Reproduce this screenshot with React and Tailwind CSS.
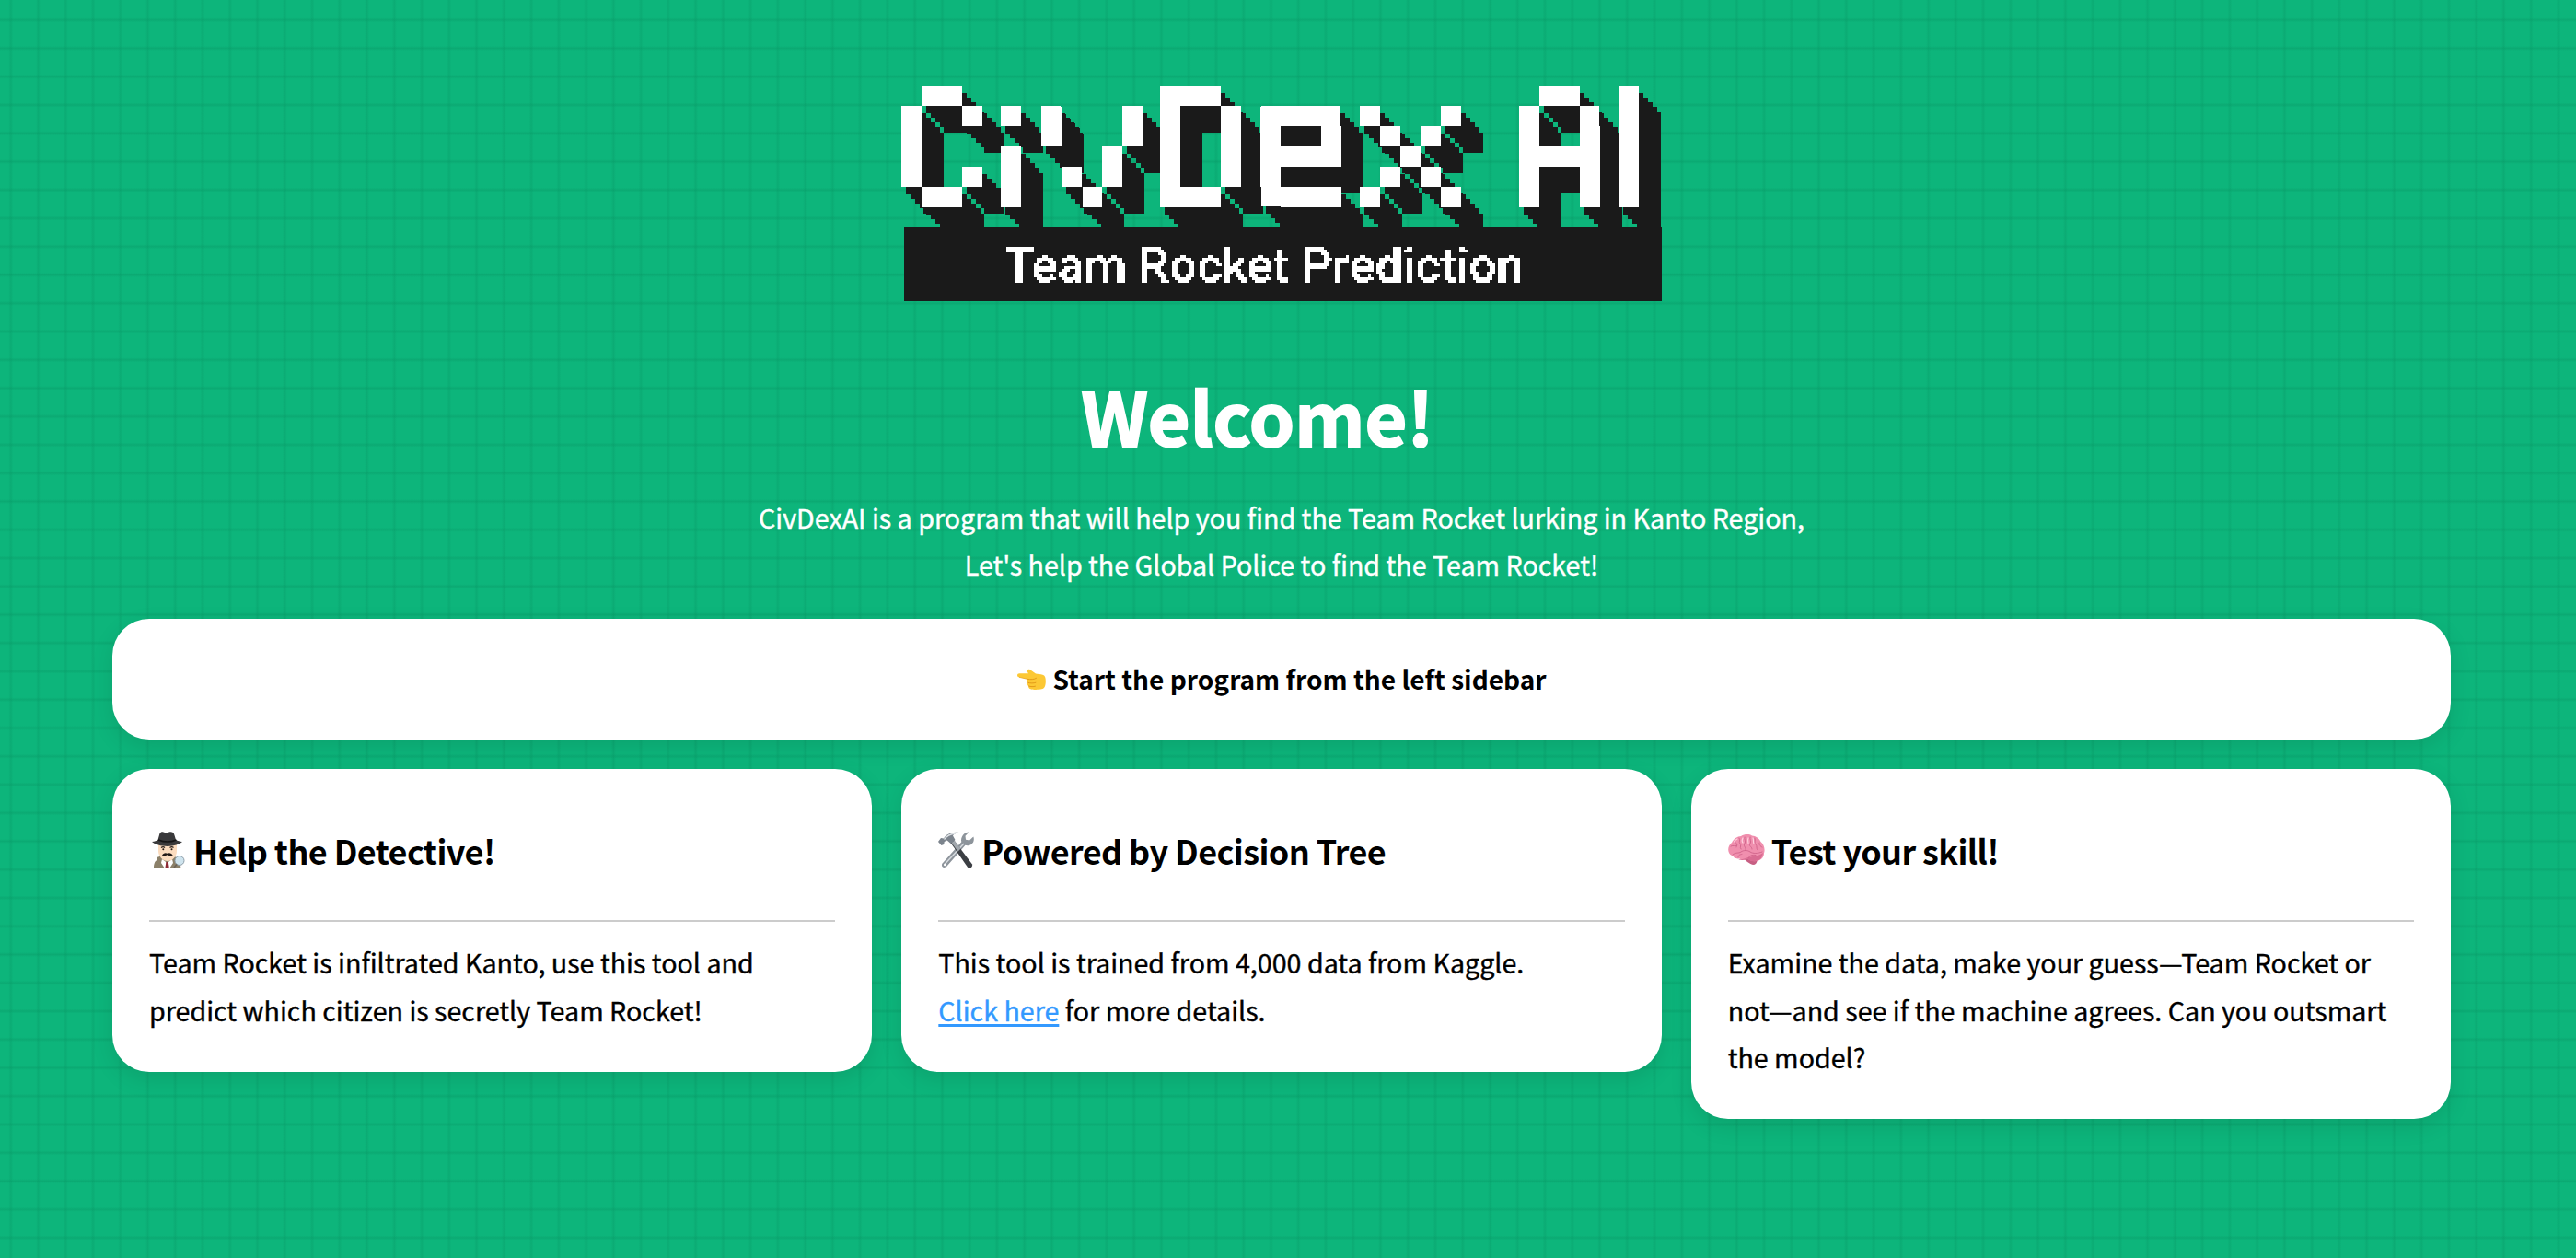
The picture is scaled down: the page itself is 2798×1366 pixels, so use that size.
import React from "react";

const SHADOW = "#1a1a1a";

function PixelFilters() {
  return (
    <svg width="0" height="0" className="absolute">
      <defs>
        <filter id="blocks" filterUnits="userSpaceOnUse" primitiveUnits="userSpaceOnUse" x="0" y="0" width="176" height="176" colorInterpolationFilters="sRGB">
          <feFlood x="10" y="10" width="2" height="2" floodColor="#fff" result="dot" />
          <feComposite in="dot" in2="dot" operator="over" x="0" y="0" width="22" height="22" result="cell" />
          <feTile in="cell" x="0" y="0" width="176" height="132" result="dots" />
          <feComposite in="SourceGraphic" in2="dots" operator="in" result="hits" />
          <feMorphology in="hits" operator="dilate" radius="10" result="fat" />
          <feComponentTransfer in="fat" result="face">
            <feFuncA type="discrete" tableValues="0 1" />
          </feComponentTransfer>
          <feFlood floodColor={SHADOW} result="ink" />
          <feComposite in="ink" in2="face" operator="in" result="dark" />
          <feOffset in="dark" dx="5" dy="8" result="s1" />
          <feOffset in="dark" dx="10" dy="13" result="s2" />
          <feOffset in="dark" dx="15" dy="18" result="s3" />
          <feOffset in="dark" dx="20" dy="23" result="s4" />
          <feOffset in="dark" dx="24" dy="29" result="s5" />
          <feMerge>
            <feMergeNode in="s5" />
            <feMergeNode in="s4" />
            <feMergeNode in="s3" />
            <feMergeNode in="s2" />
            <feMergeNode in="s1" />
            <feMergeNode in="face" />
          </feMerge>
        </filter>
        <filter id="fine" filterUnits="userSpaceOnUse" primitiveUnits="userSpaceOnUse" x="0" y="0" width="819" height="81" colorInterpolationFilters="sRGB">
          <feFlood x="1" y="1" width="1" height="1" floodColor="#fff" result="dot" />
          <feComposite in="dot" in2="dot" operator="over" x="0" y="0" width="3" height="3" result="cell" />
          <feTile in="cell" x="0" y="0" width="819" height="81" result="dots" />
          <feComposite in="SourceGraphic" in2="dots" operator="in" result="hits" />
          <feMorphology in="hits" operator="dilate" radius="1" result="fat" />
          <feComponentTransfer in="fat">
            <feFuncA type="discrete" tableValues="0 1" />
          </feComponentTransfer>
        </filter>
      </defs>
    </svg>
  );
}

// at: column on the 21.65px block grid; x, y: glyph origin; sx, sy: stretch of a 100px glyph
const LETTERS = [
  { ch: "C", at: 0, x: -5, y: 131, sx: 1.33, sy: 1.82 },
  { ch: "i", at: 5, x: -8, y: 132, sx: 1.3, sy: 1.4 },
  { ch: "v", at: 7, x: -21, y: 143, sx: 3.1, sy: 2.4, font: "Roboto, sans-serif", weight: 300 },
  { ch: "D", at: 13, x: -8, y: 132, sx: 1.42, sy: 1.84, weight: 400 },
  { ch: "e", at: 18, x: -10, y: 132, sx: 1.92, sy: 2.1 },
  { ch: "x", at: 23, x: -17, y: 132, sx: 2.85, sy: 2.1, weight: 400 },
  { ch: "A", at: 31, x: -13.3, y: 156, sx: 1.7, sy: 3.3, weight: 400, stroke: 3.2 },
  { ch: "I", at: 36, x: -8, y: 132, sx: 1.4, sy: 1.84 },
];

function Wordmark() {
  return (
    <div className="relative h-[154px] w-[826px]" aria-label="CivDex AI">
      {LETTERS.map((l) => (
        <svg key={l.at} width="176" height="176" className="absolute top-0 overflow-visible" style={{ left: l.at * 21.65 }}>
          <g filter="url(#blocks)">
            <text
              transform={`translate(${l.x} ${l.y}) scale(${l.sx} ${l.sy})`}
              fontSize="100"
              fontWeight={l.weight || 700}
              fontFamily={l.font || "Liberation Sans, Arial, sans-serif"}
              fill="#fff"
              stroke="#fff"
              strokeWidth={l.stroke || 0}
            >
              {l.ch}
            </text>
          </g>
        </svg>
      ))}
    </div>
  );
}

function Logo() {
  return (
    <div className="ml-[979px] w-[826px]">
      <Wordmark />
      <div className="ml-[3px] h-[80px] w-[823px] bg-[#1a1a1a]">
        <svg width="819" height="80" className="relative">
          <text x="109" y="59" fontSize="52" textLength="564" lengthAdjust="spacingAndGlyphs" fontWeight="500" fontFamily="Roboto, sans-serif" fill="#fff" stroke="#fff" strokeWidth="0.4" filter="url(#fine)">
            Team Rocket Prediction
          </text>
        </svg>
      </div>
    </div>
  );
}

function PointLeft() {
  return (
    <svg viewBox="0 0 32 24" className="mr-[7px] inline-block h-[24px] w-[32px]">
      <path d="M1 7.200c0-1.300 1-2 2.200-2H13L11.500 3C11 1 13 .2 15 1.200l6 4.300c2 .5 5 .6 7.500 1.200 2.600.6 3.300 3 3.300 7 0 5-1.300 8-4.300 8.600-3 .8-9 .8-11.500.2-2-.4-3.200-1.800-2.700-3.500-1.500-.8-1.700-2.500-.8-3.700-1.200-1-1.500-2.700-.3-3.900L3 9.300C1.800 9.200 1 8.400 1 7.200z" fill="#fcc834" />
      <path d="M13.300 19c2.500.8 5 .9 7.200.2M12.500 15.300c3 .8 6 .8 8.400 0M12.200 11.400c3.500.6 7 .5 9.300-1" stroke="#dc8f12" strokeWidth="0.8" fill="none" strokeLinecap="round" />
      <path d="M3 9.300l9.200 2.100" stroke="#e9a31f" strokeWidth=".8" fill="none" />
    </svg>
  );
}

function Detective() {
  return (
    <svg viewBox="0 0 36 40" className="mr-[2px] ml-[3px] inline-block h-[40px] w-[36px]">
      <path d="M2 40c0-5 1-8 4-9.500l-1-2c1-1 3-1.500 4.500-1.500h14c3 0 6 3 7 6l1 7z" fill="#8b8069" />
      <path d="M11 30l5.500 4 5.500-4 1 4-4 6h-5l-4-6z" fill="#fff" />
      <path d="M15.300 33h2.600l.9 7h-4.400z" fill="#8e2a35" />
      <path d="M7 14h20v7c0 6-4.500 11-10 11S7 27 7 21z" fill="#fbdcbf" />
      <path d="M10 17.500c1.200-1 3-1 4 0M19.500 17.500c1.200-1 3-1 4 0" stroke="#2b211c" strokeWidth="1.200" fill="none" />
      <circle cx="12.300" cy="19.300" r="1" fill="#241c19" />
      <circle cx="21.500" cy="19.300" r="1" fill="#241c19" />
      <path d="M11 26c1-2.800 4-3.300 5.800-2.200 1.800-1.100 4.800-.6 5.900 2.200-2 .3-4.200.2-5.900-.7-1.600.9-3.800 1-5.800.7z" fill="#201917" />
      <path d="M0 11c3-.4 5-1 6.500-2L8.500 2c1-2 3-2 4-1.500 1.500.8 3 1 4.500.6 1.500-.7 4-1.700 6 0 1 .8 2 4.500 3 8 2 1 4 1.600 7 2-3 3-9 4.800-16 4.800S3 14 0 11z" fill="#39393b" />
      <path d="M7 9c6 2.500 14 2.500 19.500 0" stroke="#161617" strokeWidth="1.500" fill="none" />
      <circle cx="30" cy="31.500" r="5" fill="#cfe4ee" stroke="#8d9da8" strokeWidth="1" />
      <path d="M27 35.500L24 39" stroke="#6b6257" strokeWidth="1.600" />
    </svg>
  );
}

function Tools() {
  return (
    <svg viewBox="0 0 40 40" className="inline-block h-[40px] w-[40px]">
      <path d="M33.500.5l-4 4.300.5 4 4 .8 4.300-4c1.500 4-.3 8.500-4.800 9.500-1.700.4-3 .1-4-.3L9.500 37.500c-1.500 1.800-4 1.800-5 .5s-.7-3.500 1-4.600L25.300 11.300c-1.300-5 2.700-10.800 8.200-10.800z" fill="#8d949b" />
      <path d="M28 13L7 35.500" stroke="#d7dbdf" strokeWidth="1.400" />
      <circle cx="7.300" cy="36" r="1.300" fill="#fff" />
      <path d="M13.500 12l3.500-3L37 35.500c.6 1.500-.6 3.500-2.500 4-1.300.2-2-.2-2.600-1z" fill="#3c3f44" />
      <path d="M14.500 12l3-2.500 7 9-3 3.200z" fill="#a2a8ae" />
      <path d="M0 11l3-4 3 .5C9 3 14 0 22.500 1c-4 .7-6 2-6.500 3.500l2.500 4.500-4.800 4-4-3.500-3 1.500-.5 3-2.700 1z" fill="#7c848d" />
      <path d="M6.500 8.500c3-4 7-6 12-6.500" stroke="#dfe3e6" strokeWidth="1.300" fill="none" />
    </svg>
  );
}

function Brain() {
  return (
    <svg viewBox="0 0 40 34" className="inline-block h-[34px] w-[40px]">
      <path d="M16 25c2 3 7 7 11 8 3 0 4.500-2 4.800-6z" fill="#c75f83" />
      <path d="M1 20c-2-4 0-9 3-11C6 5 10 2 14 2c4-2.500 9-2.300 12-.6 4 0 8 3 9.500 6.600 3.500 3 5 8 3.500 12.500 0 4-3 7.500-6.500 8-4 1.500-8 .5-11-2-4 2-7.500 1.500-9.500-.5C9 27 6 25.500 5 23c-2 0-3.500-1.500-4-3z" fill="#f08fae" />
      <path d="M9 26c4 2 8 1 13-1 5-1.500 11-1 16-5-1 5-3 8-6.500 8.500-4 1.500-8 .5-10-2-5 2-8 2-12.500-.5z" fill="#d96c92" />
      <path d="M5 22c4-3 6-1 9-3s7-2 10 0 8 2 13 0M11 25c0-3 2-3 4-3.500M22 26c1-3 4-4 8-3.500M3 13c3-2 4 1 7-1M7 8c2 0 3 3 2 6M12 4c2 2-1 4 1 6s-1 4 1 6M18 3c-1 3 2 4 0 7s2 4 1 7M24 3c-1 3 2 4 0 7s2 3 2 6M29 4c1 3-1 5 1 7s0 4 2 6M34 9c-1 2 1 4 3 5" stroke="#cf6289" strokeWidth=".9" fill="none" strokeLinecap="round" />
      <path d="M10 5c-2 1-3 2-3.500 3M16 4c-1 2-1 4 0 5M22 4c-1 2 0 4 0 6M27 4c1 2 0 4 1 6" stroke="#ffd0df" strokeWidth="1.200" fill="none" strokeLinecap="round" />
    </svg>
  );
}

function Card({ icon, title, children }) {
  return (
    <div className="rounded-[40px] bg-white px-[40px] pt-[40px] pb-[42px] shadow-[0_8px_24px_rgba(0,0,0,0.1)]">
      <h3 className="flex h-[96px] items-center gap-[7px] text-[36px] font-bold tracking-[-0.6px]">
        {icon}
        <span>{title}</span>
      </h3>
      <hr className="mt-[28px] mb-[18px] border-0 border-t-2 border-[#cccccc]" />
      <p className="text-[28.65px] leading-[51.2px] [-webkit-text-stroke:0.4px]">{children}</p>
    </div>
  );
}

export default function App() {
  return (
    <div className="relative h-[1366px] w-[2798px] overflow-hidden bg-[#0db57b] font-['Noto_Sans_CJK_SC','Noto_Sans',sans-serif] text-black">
      <div className="absolute inset-y-0 -left-[18.3px] w-[2840px] bg-[repeating-linear-gradient(to_right,rgba(8,150,100,0.3)_0px,transparent_2.5px,transparent_27.255px,rgba(8,150,100,0.3)_29.755px)]" />
      <div className="absolute inset-x-0 -top-[9.5px] h-[1400px] bg-[repeating-linear-gradient(to_bottom,rgba(8,150,100,0.36)_0px,transparent_2.5px,transparent_28.25px,rgba(8,150,100,0.36)_30.75px)]" />
      <PixelFilters />
      <div className="relative pt-[93px]">
        <Logo />
        <h1 className="mt-[71px] pr-[66px] text-center text-[79px] leading-[106px] font-bold text-white [-webkit-text-stroke:2px]">Welcome!</h1>
        <p className="mt-[32px] pr-[14px] text-center text-[28.65px] leading-[51.2px] text-white [-webkit-text-stroke:0.4px]">
          CivDexAI is a program that will help you find the Team Rocket lurking in Kanto Region,
          <br />
          Let's help the Global Police to find the Team Rocket!
        </p>
        <div className="mt-[34px] ml-[122px] flex h-[131px] w-[2540px] items-center justify-center rounded-[40px] bg-white text-[28.1px] font-bold shadow-[0_8px_24px_rgba(0,0,0,0.1)]">
          <PointLeft />
          <span className="-mt-[2px]">Start the program from the left sidebar</span>
        </div>
        <div className="mt-[32px] ml-[122px] grid w-[2540px] grid-cols-3 items-start gap-[32px]">
          <Card icon={<Detective />} title="Help the Detective!">
            Team Rocket is infiltrated Kanto, use this tool and
            <br />
            predict which citizen is secretly Team Rocket!
          </Card>
          <Card icon={<Tools />} title="Powered by Decision Tree">
            This tool is trained from 4,000 data from Kaggle.
            <br />
            <a className="text-[#3399ff] underline decoration-[3px] underline-offset-[3px]" href="#">Click here</a> for more details.
          </Card>
          <Card icon={<Brain />} title="Test your skill!">
            Examine the data, make your guess—Team Rocket or
            <br />
            not—and see if the machine agrees. Can you outsmart
            <br />
            the model?
          </Card>
        </div>
      </div>
    </div>
  );
}
